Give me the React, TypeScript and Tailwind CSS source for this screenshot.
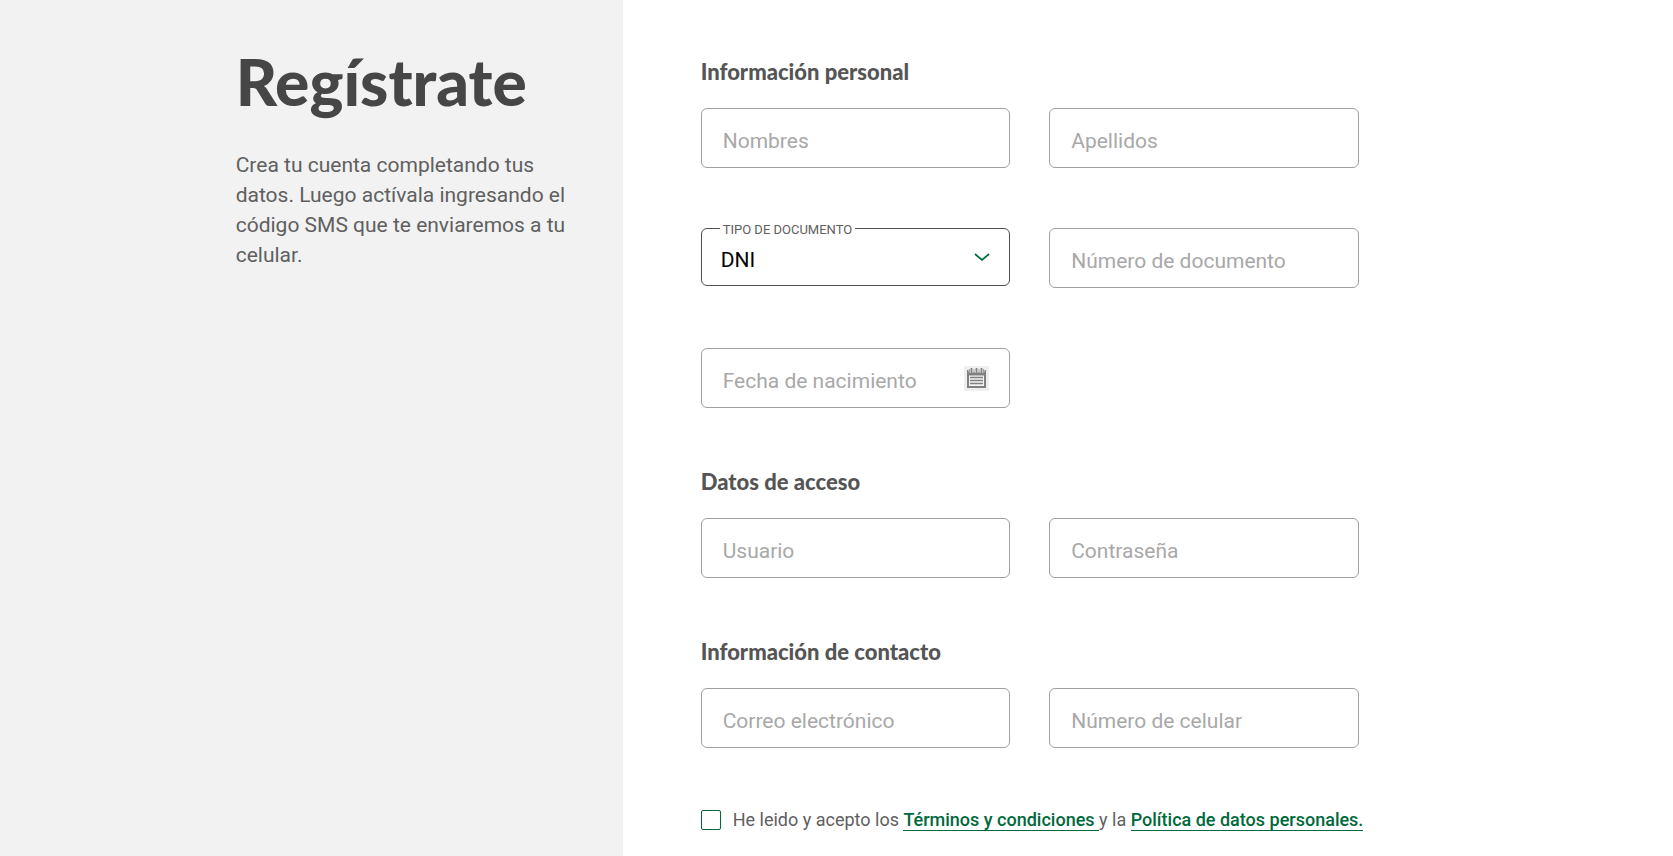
import type { ReactNode } from "react";

type TextFieldProps = {
  name: string;
  label: string;
  type?: string;
  children?: ReactNode;
};

function TextField({ name, label, type = "text", children }: TextFieldProps) {
  return (
    <div className="flex h-[60px] items-center rounded-md border border-[#a0a0a0] bg-white pr-5 focus-within:border-[#505050]">
      <input
        type={type}
        name={name}
        aria-label={label}
        placeholder={label}
        className="h-full min-w-0 flex-1 bg-transparent pt-1.5 pl-[21px] text-[21px] text-black outline-none placeholder:text-[#a8a8a8]"
      />
      {children}
    </div>
  );
}

function CalendarIcon() {
  return (
    <svg width="19" height="20" viewBox="0 0 19 20" fill="none" aria-hidden="true">
      <path d="M0 2h1.5v2h16V2H19v18H0z" fill="#808080" />
      <path d="M2 7.5h15V18H2z" fill="#f4f4f4" />
      <path d="M3 9.5h13M3 12.5h13M3 15.5h13" stroke="#808080" strokeWidth="1.6" />
      <path d="M4.5 0v5M9.5 0v5M14.5 0v5" stroke="#efefef" strokeWidth="3.4" />
      <path d="M4.5 0v5M9.5 0v5M14.5 0v5" stroke="#808080" strokeWidth="1.8" />
      <path d="M2.5 1v4M7 1v4M12 1v4M16.5 1v4" stroke="#a0a0a0" />
    </svg>
  );
}

function Section({ title, children }: { title: string; children: ReactNode }) {
  return (
    <section>
      <h2 className="mb-[22px] font-[Lato,sans-serif] text-[22px] leading-7 font-black text-[#555]">
        {title}
      </h2>
      <div className="grid max-w-[658px] grid-cols-2 items-start gap-x-[39px] gap-y-[60px]">
        {children}
      </div>
    </section>
  );
}

const linkClass = "border-b border-[#00693c] font-medium text-[#00693c]";

export default function App() {
  return (
    <div className="flex min-h-screen bg-white font-[Roboto,sans-serif]">
      <aside className="flex w-[37.22%] shrink-0 justify-end bg-[#f2f2f2]">
        <div className="w-[387px] pt-[46px] pr-10">
          <h1 className="font-[Lato,sans-serif] text-[64px] leading-[72px] font-black text-[#464646]">
            Regístrate
          </h1>
          <p className="mt-8 text-[21px] leading-[30px] text-[#606060]">
            Crea tu cuenta completando tus datos. Luego actívala ingresando el código SMS que te
            enviaremos a tu celular.
          </p>
        </div>
      </aside>

      <main className="flex-1 pt-[58px] pl-[78px]">
        <form className="flex max-w-[740px] flex-col gap-[60px]">
          <Section title="Información personal">
            <TextField name="nombres" label="Nombres" />
            <TextField name="apellidos" label="Apellidos" />
            <div className="relative">
              <label
                htmlFor="tipo-documento"
                className="absolute -top-[7px] left-[19px] bg-white px-[3px] text-[13px] leading-[18px] text-[#606060]"
              >
                TIPO DE DOCUMENTO
              </label>
              <select
                id="tipo-documento"
                className="h-[58px] w-full appearance-none rounded-md border border-[#505050] bg-white pt-2 pl-[19px] text-[21px] text-black outline-none"
              >
                <option>DNI</option>
                <option>CE</option>
                <option>Pasaporte</option>
              </select>
              <svg
                className="pointer-events-none absolute top-[25px] right-5"
                width="16"
                height="9"
                viewBox="0 0 16 9"
                fill="none"
                aria-hidden="true"
              >
                <path d="M1 1l7 6 7-6" stroke="#00693c" strokeWidth="1.7" />
              </svg>
            </div>
            <TextField name="numero-documento" label="Número de documento" />
            <TextField name="fecha-nacimiento" label="Fecha de nacimiento">
              <button
                type="button"
                aria-label="Abrir calendario"
                className="flex size-[25px] shrink-0 items-center justify-center bg-[#efefef]"
              >
                <CalendarIcon />
              </button>
            </TextField>
          </Section>

          <Section title="Datos de acceso">
            <TextField name="usuario" label="Usuario" />
            <TextField name="contrasena" label="Contraseña" type="password" />
          </Section>

          <Section title="Información de contacto">
            <TextField name="correo" label="Correo electrónico" type="email" />
            <TextField name="celular" label="Número de celular" type="tel" />
          </Section>

          <div className="flex items-center gap-3">
            <input
              id="acepto"
              type="checkbox"
              className="size-5 shrink-0 appearance-none rounded-xs border border-[#00693c] bg-white checked:bg-[#00693c]"
            />
            <label htmlFor="acepto" className="text-[18px] leading-6 text-[#606060]">
              He leido y acepto los{" "}
              <a href="#terminos" className={linkClass}>
                Términos y condiciones{" "}
              </a>
              y la{" "}
              <a href="#politica" className={linkClass}>
                Política de datos personales.
              </a>
            </label>
          </div>
        </form>
      </main>
    </div>
  );
}
